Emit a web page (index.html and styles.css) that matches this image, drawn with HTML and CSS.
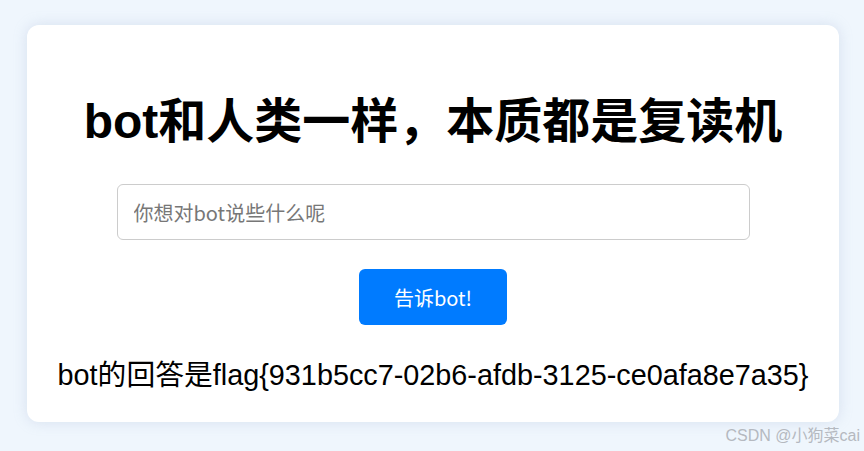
FILE: index.html
```html
<!DOCTYPE html>
<html lang="zh-CN">
<head>
<meta charset="utf-8">
<title>bot复读机</title>
<link rel="stylesheet" href="styles.css">
</head>
<body>
<main class="card">
  <h1 class="title">bot和人类一样，本质都是复读机</h1>
  <input class="ask" type="text" placeholder="你想对bot说些什么呢">
  <button class="send" type="button">告诉bot!</button>
  <p class="answer">bot的回答是flag{931b5cc7-02b6-afdb-3125-ce0afa8e7a35}</p>
</main>
<div class="watermark">CSDN @小狗菜cai</div>
</body>
</html>
```

FILE: styles.css
```css
html, body {
  margin: 0;
  height: 100%;
}
body {
  background: #eff6fd;
  padding: 25px 0 0 27px;
  box-sizing: border-box;
  font-family: "Liberation Sans", Arial, "Noto Sans CJK SC", sans-serif;
  overflow: hidden;
}
.card {
  width: 812px;
  height: 397px;
  box-sizing: border-box;
  background: #ffffff;
  border-radius: 12px;
  box-shadow: 0 0 14px rgba(150, 170, 200, 0.28);
  display: flex;
  flex-direction: column;
  align-items: center;
  padding-top: 68px;
}
.title {
  margin: 0;
  font-size: 48px;
  line-height: 58px;
  font-weight: bold;
  color: #000;
}
.ask {
  margin-top: 33px;
  width: 633px;
  height: 56px;
  box-sizing: border-box;
  border: 1px solid #cccccc;
  border-radius: 6px;
  padding: 0 16px;
  font-family: "Noto Sans CJK SC", sans-serif;
  font-size: 20px;
  color: #333;
  outline: none;
}
.ask::placeholder {
  color: #777777;
}
.send {
  margin-top: 29px;
  width: 148px;
  height: 56px;
  border: none;
  border-radius: 6px;
  background: #007bff;
  color: #ffffff;
  font-family: "Noto Sans CJK SC", sans-serif;
  font-size: 20px;
  padding: 0;
}
.answer {
  margin: 33px 0 0;
  font-size: 28.8px;
  line-height: 34px;
  color: #000;
  white-space: nowrap;
}
.watermark {
  position: absolute;
  right: 4px;
  bottom: 5px;
  font-family: "Liberation Sans", "Noto Sans CJK SC", sans-serif;
  font-size: 16px;
  color: #b5b9c0;
}
```
